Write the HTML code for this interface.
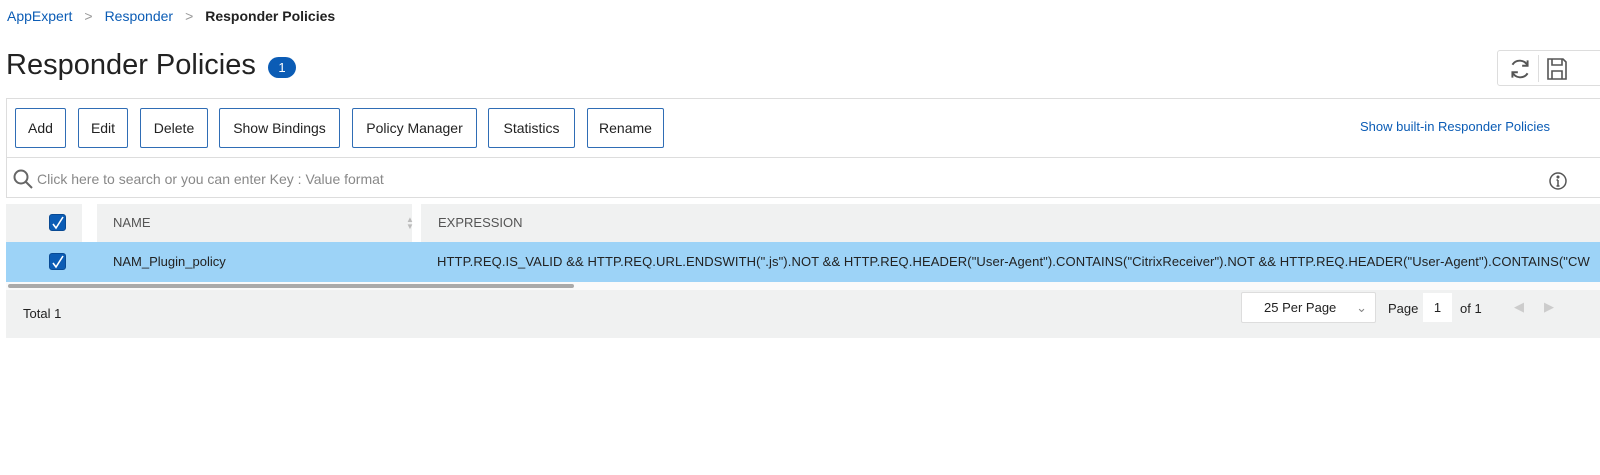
<!DOCTYPE html>
<html><head><style>
*{box-sizing:border-box;margin:0;padding:0}
body{width:1600px;height:475px;background:#fff;font-family:"Liberation Sans",sans-serif;color:#222;position:relative;overflow:hidden}
.a{position:absolute}
.bc{top:8px;left:7px;font-size:14px;white-space:nowrap}
.bc a{color:#0b5cb5;text-decoration:none}
.bc .s{color:#999;margin:0 12px}
.bc b{font-weight:bold;color:#222}
h1{position:absolute;left:6px;top:49px;font-size:29px;font-weight:normal;color:#222}
.badge{left:268px;top:57px;width:28px;height:21px;border-radius:11px;background:#0b5cb5;color:#fff;font-size:13px;text-align:center;line-height:21px}
.tools{left:1497px;top:50px;width:110px;height:36px;border:1px solid #ddd;border-radius:3px}
.tb{left:6px;top:98px;width:1600px;height:60px;border-top:1px solid #ddd;border-bottom:1px solid #ddd;border-left:1px solid #ddd}
.btn{position:absolute;top:108px;height:40px;border:1px solid #2f6db5;border-radius:2px;background:#fff;font-size:14px;line-height:38px;text-align:center;color:#222}
.link{left:1360px;top:119px;font-size:13px;color:#0b5cb5}
.search{left:6px;top:158px;width:1600px;height:40px;border-bottom:1px solid #ddd;border-left:1px solid #ddd}
.ph{left:37px;top:171px;font-size:14px;color:#888}
.hdr{left:6px;top:204px;width:1600px;height:38px;background:#f0f1f1}
.row{left:6px;top:242px;width:1600px;height:40px;background:#9dd3f7}
.cb{position:absolute;width:17px;height:17px;background:#0b5cb5;border-radius:3px;border:1px solid #084a94}
.foot{left:6px;top:290px;width:1600px;height:48px;background:#f0f1f1}
</style></head><body>
<div class="a bc"><a>AppExpert</a><span class="s">&gt;</span><a>Responder</a><span class="s">&gt;</span><b>Responder Policies</b></div>
<h1>Responder Policies</h1>
<div class="a badge">1</div>
<div class="a tools">
<svg class="a" style="left:9px;top:5px" width="26" height="26" viewBox="0 0 24 24" fill="none" stroke="#555" stroke-width="1.8"><path d="M19 9A8 8 0 0 0 5 8M5 15a8 8 0 0 0 14 1"/><path d="M19 4v5h-5M5 20v-5h5"/></svg>
<div class="a" style="left:40px;top:4px;width:1px;height:27px;background:#ddd"></div>
<svg class="a" style="left:48px;top:5px" width="22" height="26" viewBox="0 0 22 24" fill="none" stroke="#555" stroke-width="1.6"><path d="M2 2h15l3 3v17H2z"/><path d="M6 2v6h10V2M6 22v-8h10v8"/></svg>
</div>
<div class="a tb"></div>
<div class="btn" style="left:15px;width:51px">Add</div>
<div class="btn" style="left:78px;width:50px">Edit</div>
<div class="btn" style="left:140px;width:68px">Delete</div>
<div class="btn" style="left:219px;width:121px">Show Bindings</div>
<div class="btn" style="left:352px;width:125px">Policy Manager</div>
<div class="btn" style="left:488px;width:87px">Statistics</div>
<div class="btn" style="left:587px;width:77px">Rename</div>
<div class="a link">Show built-in Responder Policies</div>
<div class="a search"></div>
<svg class="a" style="left:12px;top:168px" width="22" height="22" viewBox="0 0 22 22" fill="none" stroke="#666" stroke-width="2"><circle cx="9" cy="9" r="6.5"/><path d="M14 14l6 6"/></svg>
<div class="a ph">Click here to search or you can enter Key : Value format</div>
<svg class="a" style="left:1548px;top:171px" width="20" height="20" viewBox="0 0 20 20" fill="none" stroke="#555" stroke-width="1.5"><circle cx="10" cy="10" r="8"/><path d="M10 9v6M8.5 15h3M8.5 9H10"/><circle cx="10" cy="6" r=".8" fill="#555"/></svg>
<div class="a hdr">
<div class="a" style="left:76px;top:0;width:15px;height:38px;background:#fff"></div>
<div class="a" style="left:406px;top:0;width:9px;height:38px;background:#fff"></div>
<div class="cb" style="left:43px;top:10px"></div>
<svg class="a" style="left:45px;top:12px" width="14" height="14" viewBox="0 0 14 14" fill="none" stroke="#fff" stroke-width="1.6"><path d="M2 8l3 4 7-11"/></svg>
<div class="a" style="left:107px;top:11px;font-size:13px;color:#555">NAME</div>
<div class="a" style="left:400px;top:12px;font-size:8px;color:#bbb;line-height:7px">▲<br>▼</div>
<div class="a" style="left:432px;top:11px;font-size:13px;color:#555">EXPRESSION</div>
</div>
<div class="a row">
<div class="cb" style="left:43px;top:11px"></div>
<svg class="a" style="left:45px;top:13px" width="14" height="14" viewBox="0 0 14 14" fill="none" stroke="#fff" stroke-width="1.6"><path d="M2 8l3 4 7-11"/></svg>
<div class="a" style="left:107px;top:12px;font-size:13px">NAM_Plugin_policy</div>
<div class="a" style="left:431px;top:12px;font-size:13px;white-space:nowrap;letter-spacing:0.1px">HTTP.REQ.IS_VALID &amp;&amp; HTTP.REQ.URL.ENDSWITH(".js").NOT &amp;&amp; HTTP.REQ.HEADER("User-Agent").CONTAINS("CitrixReceiver").NOT &amp;&amp; HTTP.REQ.HEADER("User-Agent").CONTAINS("CW</div>
</div>
<div class="a" style="left:6px;top:282px;width:1600px;height:8px;background:#fafafa"></div>
<div class="a" style="left:8px;top:284px;width:566px;height:4px;border-radius:2px;background:#aaa"></div>
<div class="a foot">
<div class="a" style="left:17px;top:16px;font-size:13px">Total 1</div>
<div class="a" style="left:1235px;top:2px;width:135px;height:31px;background:#fff;border:1px solid #ddd;border-radius:2px;font-size:13px;line-height:29px;padding-left:22px">25 Per Page<span class="a" style="right:8px;top:0;color:#888">&#8964;</span></div>
<div class="a" style="left:1382px;top:11px;font-size:13px">Page</div>
<div class="a" style="left:1417px;top:3px;width:29px;height:29px;background:#fff;font-size:13px;line-height:29px;text-align:center">1</div>
<div class="a" style="left:1454px;top:11px;font-size:13px">of 1</div>
<div class="a" style="left:1508px;top:9px;font-size:13px;color:#ccc">◀</div>
<div class="a" style="left:1538px;top:9px;font-size:13px;color:#ccc">▶</div>
</div>
</body></html>
